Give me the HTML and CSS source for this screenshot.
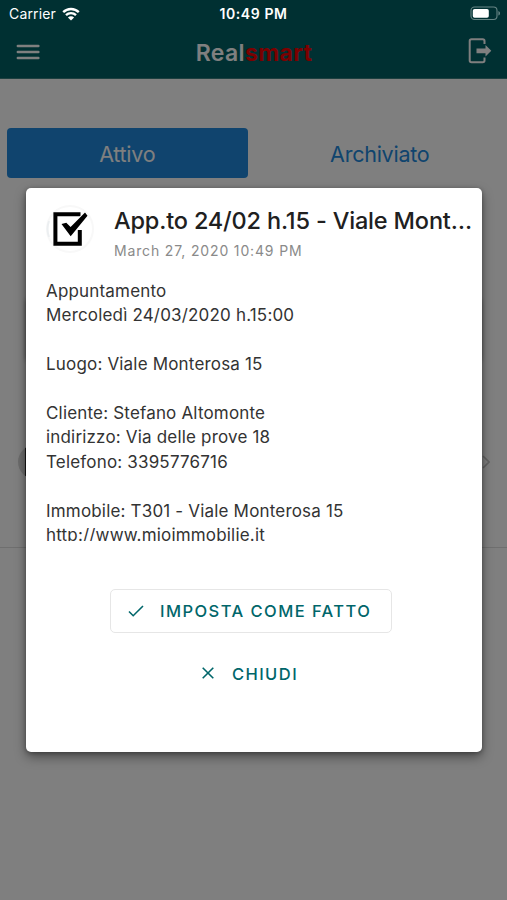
FILE: index.html
```html
<!DOCTYPE html>
<html lang="it">
  <head>
    <meta charset="UTF-8" />
    <meta name="viewport" content="width=device-width, initial-scale=1.0" />
    <title>Realsmart</title>
    <link rel="stylesheet" href="styles.css">
  </head>
  <body>
    <!-- Barra di stato -->
    <div class="status-bar">
      <div class="carrier">
        <span>Carrier</span>
        <svg class="wifi" viewBox="0 0 18 14">
          <path d="M1.2 5.1a11.2 11.2 0 0 1 15.6 0M4 8.1a7.2 7.2 0 0 1 10 0" fill="none" stroke="#fff" stroke-width="2.4" />
          <path d="M9 13.6 5.9 10.5a4.4 4.4 0 0 1 6.2 0z" fill="#fff" />
        </svg>
      </div>
      <div class="clock">10:49 PM</div>
      <svg class="battery" viewBox="0 0 31 15">
        <rect x="1" y="1" width="26" height="12.5" rx="3.5" fill="none" stroke="#668585" stroke-width="1.1" />
        <rect x="2.8" y="2.9" width="16" height="8.8" rx="1.8" fill="#fff" />
        <path d="M28.4 5v4.6c2.2-.8 2.2-3.8 0-4.6z" fill="#668585" />
      </svg>
    </div>

    <header class="header">
      <svg class="menu-icon" viewBox="0 0 24 16">
        <path d="M1.8 2h20.6M1.8 8h20.6M1.8 14h20.6" stroke="#fff" stroke-width="2.4" stroke-linecap="round" />
      </svg>
      <h1><span class="real">Real</span><span class="smart">smart</span></h1>
      <svg class="logout-icon" viewBox="0 0 24 26">
        <path d="M16.5 6V3a1.8 1.8 0 0 0-1.8-1.8H3.5A1.8 1.8 0 0 0 1.7 3v19.500a1.8 1.8 0 0 0 1.8 1.8h11.200a1.8 1.8 0 0 0 1.8-1.8v-3" fill="none" stroke="#fff" stroke-width="2" />
        <path d="M8.500 10.500h9V7.100l5.800 5.700-5.800 5.700v-3.300h-9z" fill="#fff" />
      </svg>
    </header>

    <!-- Schede -->
    <nav class="tabs">
      <button class="tab active">Attivo</button>
      <button class="tab">Archiviato</button>
    </nav>

    <main class="list">
      <div class="search-box"></div>
      <div class="list-item">
        <div class="avatar"></div>
        <svg class="chevron" viewBox="0 0 8 14">
          <path d="M1 1l6 6-6 6" fill="none" stroke="#c4c4c4" stroke-width="1.6" />
        </svg>
      </div>
    </main>

    <!-- Finestra di dettaglio -->
    <div class="overlay">
      <section class="card">
        <div class="card-header">
          <div class="card-icon">
            <svg viewBox="0 0 48 48">
              <circle cx="24" cy="24" r="23" fill="none" stroke="#f8f8f8" stroke-width="2" />
              <path d="M3 32A23 23 0 0 1 3 16" fill="none" stroke="#eceff1" stroke-width="2" />
              <path d="M34.500 9.300H9.400v29.400h24.400V25" fill="none" stroke="#000" stroke-width="4" />
              <path d="M15.500 19l9.200 12.300L41.500 10.800l-2.500-3.300L24.600 22l-4.300-4.300z" fill="#000" stroke="#fff" stroke-width="1.600" paint-order="stroke" />
            </svg>
          </div>
          <div class="card-heading">
            <h2>App.to 24/02 h.15 - Viale Mont…</h2>
            <p class="card-date">March 27, 2020 10:49 PM</p>
          </div>
        </div>
        <div class="card-text">Appuntamento
Mercoledì 24/03/2020 h.15:00

Luogo: Viale Monterosa 15

Cliente: Stefano Altomonte
indirizzo: Via delle prove 18
Telefono: 3395776716

Immobile: T301 - Viale Monterosa 15
http://www.mioimmobilie.it</div>
        <div class="card-actions">
          <button class="btn btn-outline">
            <svg class="check" viewBox="0 0 16 12">
              <path d="M1 6.500l4.200 4.200L15 1" fill="none" stroke="currentColor" stroke-width="1.600" />
            </svg>
            <span>IMPOSTA COME FATTO</span>
          </button>
          <button class="btn btn-text">
            <svg class="close" viewBox="0 0 12 12">
              <path d="M.7.7l10.600 10.600M11.300.7L.7 11.300" fill="none" stroke="currentColor" stroke-width="1.600" />
            </svg>
            <span>CHIUDI</span>
          </button>
        </div>
      </section>
    </div>
  </body>
</html>
```
FILE: styles.css
```css
* {
  margin: 0;
  padding: 0;
  box-sizing: border-box;
  font-family: Inter, "Liberation Sans", sans-serif;
}

body {
  position: relative;
  background: white;
  height: 900px;
  overflow: hidden;
}

svg {
  display: block;
  flex: none;
}

/* Barra di stato */
.status-bar {
  position: relative;
  z-index: 2;
  display: grid;
  grid-template-columns: 1fr auto 1fr;
  align-items: center;
  height: 27px;
  padding: 0 6px 0 9px;
  color: white;
  font-size: 14px;
}

.carrier {
  display: flex;
  align-items: center;
  gap: 6px;
  letter-spacing: 0.15px;
}

.wifi {
  width: 18px;
  height: 14px;
}

.clock {
  margin-right: 3px;
  font-size: 14px;
  font-weight: 600;
  letter-spacing: 0.6px;
}

.battery {
  width: 31px;
  height: 15px;
  justify-self: end;
}

.header {
  display: flex;
  align-items: center;
  justify-content: space-between;
  height: 79px;
  margin-top: -27px;
  padding: 25px 15px 0 16px;
  background: #006064;
  border-bottom: 1px solid #3a8080;
}

.menu-icon {
  width: 24px;
  height: 16px;
}

.logout-icon {
  width: 24px;
  height: 26px;
  margin-top: -2px;
}

h1 {
  margin-top: 2px;
  font-size: 23px;
  font-weight: 600;
  line-height: 28px;
  letter-spacing: 0.35px;
}

.real {
  color: white;
}

.smart {
  color: #f60000;
  font-weight: 700;
}

/* Schede */
.tabs {
  display: flex;
  gap: 12px;
  padding: 49px 7px 0;
}

.tab {
  flex: 1;
  height: 50px;
  padding-top: 2px;
  border: none;
  border-radius: 4px;
  background: transparent;
  color: #2089dc;
  font-size: 21.5px;
  letter-spacing: -0.25px;
}

.tab.active {
  background: #2089dc;
  color: white;
}

/* Elenco */
.list {
  padding-top: 121px;
}

.search-box {
  height: 62px;
  margin: 0 26px;
  border-radius: 3px;
  box-shadow: 0 0 5px rgba(0, 0, 0, 0.4);
}

.list-item {
  display: flex;
  align-items: center;
  justify-content: space-between;
  height: 187px;
  padding: 16px 17px 0 18px;
  border-bottom: 1px solid #dedede;
}

.avatar {
  width: 34px;
  height: 34px;
  border-radius: 50%;
  background: linear-gradient(to right, #d8d8d8 7px, #333 7px);
}

.chevron {
  width: 8px;
  height: 14px;
}

/* Finestra */
.overlay {
  position: absolute;
  inset: 0;
  z-index: 1;
  padding: 187.5px 25px 0 26px;
  background: rgba(0, 0, 0, 0.5);
}

.card {
  height: 564px;
  background: white;
  border-radius: 5px;
  box-shadow: 0 5px 12px rgba(0, 0, 0, 0.4), 0 1px 4px rgba(0, 0, 0, 0.3);
}

.card-header {
  display: flex;
  gap: 20px;
  padding: 17.5px 0 0 20px;
}

.card-icon {
  width: 48px;
  height: 48px;
}

h2 {
  color: #202020;
  font-size: 23.5px;
  font-weight: 500;
  line-height: 32px;
  letter-spacing: -0.17px;
  white-space: nowrap;
}

.card-date {
  color: #8a8a8a;
  font-size: 14px;
  line-height: 20px;
  margin-top: 4px;
  letter-spacing: 0.85px;
}

.card-text {
  height: 262px;
  margin: 18px 20px 0;
  overflow: hidden;
  color: #333;
  font-size: 17px;
  line-height: 24.4px;
  letter-spacing: 0.18px;
  white-space: pre-line;
}

.card-actions {
  display: flex;
  flex-direction: column;
  align-items: center;
  gap: 18px;
  padding-top: 48px;
  padding-right: 6px;
}

.btn {
  display: flex;
  align-items: center;
  height: 44px;
  border: none;
  background: white;
  color: #00666a;
  font-size: 16.5px;
  font-weight: 500;
  letter-spacing: 1.45px;
}

.btn-outline {
  width: 282px;
  padding-left: 17px;
  gap: 16px;
  border: 1px solid #e6e6e6;
  border-radius: 5px;
}

.btn-text {
  gap: 18px;
  margin-right: 2px;
}

.btn-text span {
  padding-top: 2px;
}

.check {
  width: 16px;
  height: 12px;
}

.close {
  width: 12px;
  height: 12px;
}
```
